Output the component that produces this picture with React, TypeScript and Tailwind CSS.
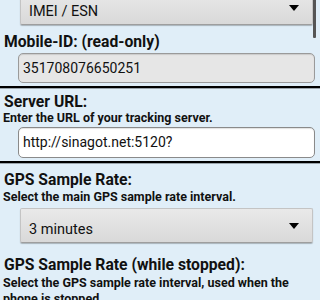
import React from "react";

function Arrow() {
  return (
    <svg width="10" height="6" viewBox="0 0 10 6" className="block">
      <polygon points="0,0 10,0 5,6" fill="#000" />
    </svg>
  );
}

function Spinner({ text, className = "" }: { text: string; className?: string }) {
  return (
    <div
      className={`ml-[20px] mr-[7px] h-[35px] flex items-center justify-between pl-[8px] pr-[13px] rounded-[2px] border border-[#c4c4c4] border-b-[#9e9e9e] bg-gradient-to-b from-[#e9e9e9] to-[#d9d9d9] shadow-[0_1px_1px_rgba(0,0,0,0.25)] ${className}`}
    >
      <span className="mt-[8px] text-[14.5px] text-[#111]">{text}</span>
      <Arrow />
    </div>
  );
}

function Label({ children, className = "" }: { children: React.ReactNode; className?: string }) {
  return (
    <div className={`pl-[4px] h-[18px] leading-[18px] text-[15.7px] font-bold text-[#111] whitespace-nowrap ${className}`}>
      {children}
    </div>
  );
}

function Hint({ children, className = "" }: { children: React.ReactNode; className?: string }) {
  return (
    <div className={`pl-[3px] pr-[20px] text-[12.5px] font-bold text-[#111] ${className}`}>
      {children}
    </div>
  );
}

function Separator({ className = "" }: { className?: string }) {
  return (
    <div className={className}>
      <div className="h-[2px] bg-black" />
      <div className="h-[1px] bg-[#9aa4ab]" />
    </div>
  );
}

export default function App() {
  return (
    <div
      className="relative w-[320px] h-[300px] overflow-hidden bg-[#e0eef8]"
      style={{ fontFamily: "Roboto, 'Liberation Sans', sans-serif" }}
    >
      <div className="-mt-[10px]">
        <Spinner text="IMEI / ESN" />
        <Label className="mt-[8px]">Mobile-ID: (read-only)</Label>
        <div className="mt-[2px] ml-[18px] mr-[5px] h-[30px] flex items-center pl-[4px] rounded-[5px] border border-[#9a9a9a] bg-[#e6e6e6] shadow-[inset_0_1px_1px_rgba(0,0,0,0.12)]">
          <span className="text-[14px] text-[#111]">351708076650251</span>
        </div>
        <Separator className="mt-[3px]" />
        <Label className="mt-[4px]">Server URL:</Label>
        <Hint className="leading-[14px]">Enter the URL of your tracking server.</Hint>
        <div className="mt-[2px] ml-[18px] mr-[5px] h-[31px] flex items-center pl-[4px] rounded-[5px] border border-[#8a8a8a] bg-white shadow-[inset_0_1px_1px_rgba(0,0,0,0.12)]">
          <span className="text-[14px] text-[#111]">http://sinagot.net:5120?</span>
        </div>
        <Separator className="mt-[3px]" />
        <Label className="mt-[7px]">GPS Sample Rate:</Label>
        <Hint className="mt-[1px] leading-[14px]">Select the main GPS sample rate interval.</Hint>
        <Spinner text="3 minutes" className="mt-[4px]" />
        <Label className="mt-[13px]">GPS Sample Rate (while stopped):</Label>
        <Hint className="mt-[1px] leading-[16px]">
          Select the GPS sample rate interval, used when the phone is stopped.
        </Hint>
      </div>
      <div className="absolute right-[4px] top-0 w-[3px] h-[38px] bg-[#555] rounded-b-[1px]" />
    </div>
  );
}
